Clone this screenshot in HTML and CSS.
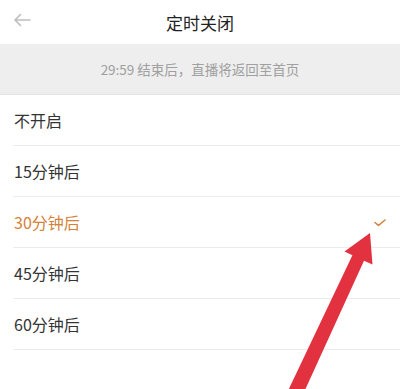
FILE: index.html
```html
<!DOCTYPE html>
<html lang="zh-CN">
<head>
<meta charset="utf-8">
<title>定时关闭</title>
<link rel="stylesheet" href="styles.css">
</head>
<body>
<div class="page">
  <header class="topbar">
    <svg class="back" width="18" height="14" viewBox="0 0 18 14"><path d="M17 7H2M7.5 1.5L2 7l5.5 5.5" fill="none" stroke="#bdbdbd" stroke-width="1.6" stroke-linecap="round" stroke-linejoin="round"/></svg>
    <h1 class="title">定时关闭</h1>
  </header>
  <div class="notice">29:59 结束后，直播将返回至首页</div>
  <ul class="options">
    <li class="option">不开启</li>
    <li class="option">15分钟后</li>
    <li class="option selected">30分钟后
      <svg class="check" width="12" height="8" viewBox="0 0 12 8"><path d="M1 3.5l3.5 3L11 1" fill="none" stroke="#d4823a" stroke-width="1.6" stroke-linecap="round" stroke-linejoin="round"/></svg>
    </li>
    <li class="option">45分钟后</li>
    <li class="option">60分钟后</li>
  </ul>
  <svg class="annot" width="400" height="389" viewBox="0 0 400 389">
    <polygon fill="#e2323f" points="370,233 344.5,251.5 352.4,255.3 286,395 300,401 364,260.8 372.5,264.5"/>
  </svg>
</div>
</body>
</html>
```

FILE: styles.css
```css
html, body {
  margin: 0;
  padding: 0;
  background: #ffffff;
}
body {
  font-family: "Noto Sans CJK SC", "Noto Sans", sans-serif;
  color: #333;
}
.page {
  position: relative;
  width: 400px;
  height: 389px;
  overflow: hidden;
}
.topbar {
  height: 44px;
  display: flex;
  align-items: center;
  justify-content: center;
  position: relative;
}
.back {
  position: absolute;
  left: 13px;
  top: 13px;
}
.title {
  margin: 0;
  font-size: 17px;
  font-weight: 400;
  color: #222;
  line-height: 1;
}
.notice {
  height: 51px;
  background: #eeeeee;
  border-bottom: 1px solid #e4e4e4;
  box-sizing: border-box;
  display: flex;
  align-items: center;
  justify-content: center;
  font-size: 13.5px;
  color: #a0a0a0;
}
.options {
  list-style: none;
  margin: 0;
  padding: 0 0 0 13px;
}
.option {
  height: 50px;
  border-bottom: 1px solid #ececec;
  display: flex;
  align-items: center;
  justify-content: space-between;
  padding: 0 16px 0 1px;
  font-size: 16px;
  color: #333;
}
.option.selected {
  color: #d4823a;
}
.check {
  margin-top: 2px;
  margin-right: -2px;
}
.annot {
  position: absolute;
  left: 0;
  top: 0;
  pointer-events: none;
}
```
